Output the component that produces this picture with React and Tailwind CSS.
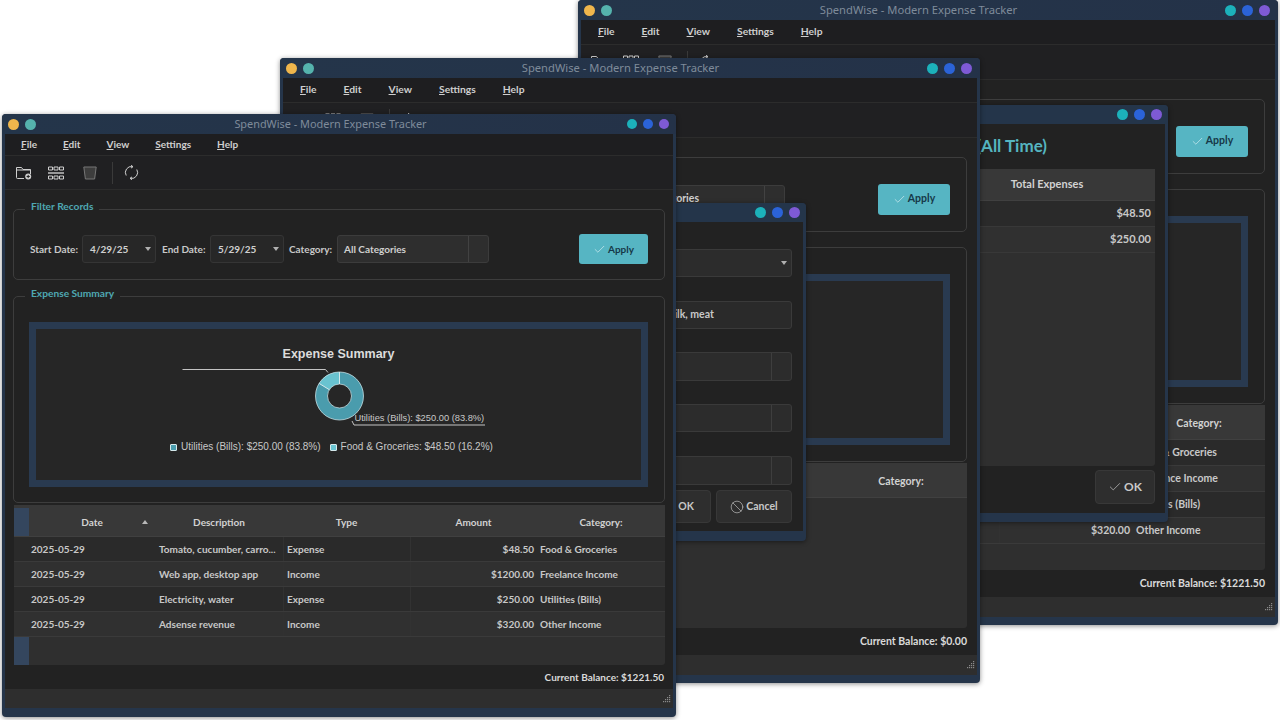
import React from 'react';
import {Check, Ban} from 'lucide-react';

const rows = [
    ['2025-05-29', 'Tomato, cucumber, carro...', 'Expense', '$48.50', 'Food & Groceries'],
    ['2025-05-29', 'Web app, desktop app', 'Income', '$1200.00', 'Freelance Income'],
    ['2025-05-29', 'Electricity, water', 'Expense', '$250.00', 'Utilities (Bills)'],
    ['2025-05-29', 'Adsense revenue', 'Income', '$320.00', 'Other Income'],
];

const sizes = {
    small: {
        outer: 'w-[674px] h-[603px]',
        title: 'h-[20px] pl-[6px] pr-[7px]',
        titleText: 'text-[10.9px] pr-[25px]',
        text: 'text-[10px]',
        menu: 'h-[21px] pl-[16px] gap-[26px] text-[10px]',
        toolbar: 'h-[35px]',
        group1: 'mt-[19px] h-[71px] mx-[8px]',
        group2: 'mt-[16px] h-[207px] mx-[8px] pt-[25px] pb-[15px] pl-[15px] pr-[16px]',
        filter: 'pt-[9px] pl-[16px] pr-[16px]',
        date: 'w-[74px]',
        combo: 'w-[152px] mx-[5px]',
        apply: 'w-[69px] h-[30px]',
        table: 'mt-[2px] h-[160px] ml-[9px] mr-[8px]',
        cols: 'grid-cols-[15px_126px_128px_127px_127px_1fr]',
        head: 'h-[32px]',
        row: 'h-[25px]',
        balance: 'h-[24px] pr-[9px]',
        status: 'h-[19px]',
        pad: 'mb-[9px]',
    },
    large: {
        outer: 'w-[700px] h-[625px]',
        title: 'h-[20px] pl-[6px] pr-[8px]',
        titleText: 'text-[11.2px] pr-[23px]',
        text: 'text-[10.5px]',
        menu: 'h-[24px] pl-[17px] gap-[27px] text-[10.3px]',
        toolbar: 'h-[36px]',
        group1: 'mt-[19px] h-[75px] mx-[10px]',
        group2: 'mt-[15px] h-[215px] mx-[10px] pt-[26px] pb-[16px] pl-[16px] pr-[16px]',
        filter: 'pt-[9px] pl-[16px] pr-[16px]',
        date: 'w-[79px]',
        combo: 'w-[158px] mx-[5px]',
        apply: 'w-[72px] h-[31px]',
        table: 'mt-[1px] h-[165px] ml-[10px] mr-[10px]',
        cols: 'grid-cols-[15px_131px_131px_131px_134px_1fr]',
        head: 'h-[35px]',
        row: 'h-[26px]',
        balance: 'h-[27px] pr-[10px]',
        status: 'h-[20px]',
        pad: 'mb-[8px]',
    },
};

function Dots({small}) {
    const dot = small ? 'w-[10px] h-[10px] rounded-full' : 'w-[11px] h-[11px] rounded-full';
    return (
        <div className="flex gap-[6px]">
            <span className={dot + ' bg-[#1cb1bb]'}/>
            <span className={dot + ' bg-[#2b63d8]'}/>
            <span className={dot + ' bg-[#7e5ad5]'}/>
        </div>
    );
}

function Grip() {
    const cells = [[6, 0], [4, 2], [6, 2], [2, 4], [4, 4], [6, 4], [0, 6], [2, 6], [4, 6], [6, 6]];
    return (
        <svg width="8" height="8" viewBox="0 0 8 8" className="mr-[2px]">
            {cells.map(([x, y]) => <rect key={x + '-' + y} x={x} y={y} width="1.2" height="1.2" fill="#8a8a8a"/>)}
        </svg>
    );
}

function FolderIcon() {
    return (
        <svg width="16" height="14" viewBox="0 0 16 14" fill="none" stroke="#cfcfcf" strokeWidth="1">
            <path d="M8 12.5H1.5a1 1 0 0 1-1-1V1.5h5l1.5 2h7.5V8"/>
            <path d="M.5 4h14"/>
            <circle cx="12.2" cy="10.5" r="3" fill="#cfcfcf" stroke="none"/>
            <path d="M10.6 10.5h3.2M12.2 8.9v3.2" stroke="#222222"/>
        </svg>
    );
}

function GridIcon() {
    return (
        <svg width="16" height="14" viewBox="0 0 16 14" fill="none" stroke="#cfcfcf" strokeWidth="1">
            <path d="M.5 1h4v3h-4zM6 1h4v3H6zM11.5 1h4v3h-4zM.5 10h4v3h-4zM6 10h4v3H6zM11.5 10h4v3h-4z"/>
            <path d="M0 7h16" strokeWidth="1.4"/>
        </svg>
    );
}

function TrashIcon() {
    return (
        <svg width="14" height="14" viewBox="0 0 14 14" fill="#3d3d3d" stroke="#777777" strokeWidth="1">
            <path d="M.8 1h12.4l-1.6 12H2.4z"/>
        </svg>
    );
}

function RefreshIcon() {
    return (
        <svg width="15" height="15" viewBox="0 0 15 15" fill="none" stroke="#cfcfcf" strokeWidth="1">
            <path d="M2.2 10.5A6 6 0 0 1 8.5 1.6"/>
            <path d="M12.8 4.5A6 6 0 0 1 6.5 13.4"/>
            <path d="M7 .3l2 1.4-2 1.4M8 11.9l-2 1.4 2 1.4"/>
        </svg>
    );
}

function Toolbar({small}) {
    return (
        <div className={sizes[small ? 'small' : 'large'].toolbar + ' flex items-center border-y border-[#2c2c2c] bg-[#202022] ' + (small ? 'pl-[11px]' : 'pl-[10px]')}>
            <div className="w-[32px]"><FolderIcon/></div>
            <div className="w-[35px]"><GridIcon/></div>
            <div className="w-[29px]"><TrashIcon/></div>
            <div className="w-px h-[22px] bg-[#3a3a3a] mr-[11px]"/>
            <RefreshIcon/>
        </div>
    );
}

function Menu({small}) {
    const items = [['F', 'ile'], ['E', 'dit'], ['V', 'iew'], ['S', 'ettings'], ['H', 'elp']];
    return (
        <div className={sizes[small ? 'small' : 'large'].menu + ' flex items-center bg-[#1e1e20] font-bold text-[#cfcfcf]'}>
            {items.map(([first, rest]) => <span key={first}><span className="underline">{first}</span>{rest}</span>)}
        </div>
    );
}

function Group({title, className, children}) {
    return (
        <div className={className + ' relative rounded-[5px] border border-[#3d3d3d]'}>
            <span className="absolute -top-[12px] left-[11px] bg-[#222222] px-[6px] text-[10.2px] font-bold leading-[16px] text-[#4fa8b2]">{title}</span>
            {children}
        </div>
    );
}

function Caret() {
    return <span className="w-0 h-0 border-x-[3.5px] border-x-transparent border-t-[4px] border-t-[#b0b0b0]"/>;
}

function DateBox({value, className}) {
    return (
        <div className={className + ' h-[28px] mx-[5px] flex items-center justify-between pl-[7px] pr-[4px] rounded-[3px] border border-[#353535] bg-[#272727] text-[#d0d0d0]'}>
            {value}
            <Caret/>
        </div>
    );
}

function Filter({small}) {
    const s = sizes[small ? 'small' : 'large'];
    return (
        <div className={s.filter + ' ' + s.text + " h-full flex items-center font-['Lato',sans-serif] font-bold text-[#c8c8c8]"}>
            <span className="w-[47px] whitespace-nowrap">Start Date:</span>
            <DateBox value="4/29/25" className={s.date}/>
            <span className="ml-[1px] w-[43px] whitespace-nowrap">End Date:</span>
            <DateBox value="5/29/25" className={s.date}/>
            <span className="w-[43px] whitespace-nowrap">Category:</span>
            <div className={s.combo + ' h-[28px] flex rounded-[3px] border border-[#3c3c3c] bg-[#2e2e2e]'}>
                <div className="flex-1 flex items-center pl-[6px] text-[#d0d0d0]">All Categories</div>
                <div className="w-[20px] border-l border-[#424242]"/>
            </div>
            <div className={s.apply + ' ml-auto flex items-center justify-center gap-[2px] rounded-[3px] bg-[#56b5c3] text-[#163848]'}>
                <Check size={13} strokeWidth={1.2} color="#d8f0f4"/>
                <span>Apply</span>
            </div>
        </div>
    );
}

function Donut() {
    return (
        <svg width="320" height="64" viewBox="0 0 320 64" fill="none" className="absolute inset-0">
            <path d="M3.5 2.5H146.5L149 5.5" stroke="#c4c4c4"/>
            <path d="M173 54l2 4H306" stroke="#c4c4c4"/>
            <circle cx="160.5" cy="29" r="18" stroke="#4a9cad" strokeWidth="12"/>
            <path d="M160.5 5A24 24 0 0 0 140.1 16.4L150.3 22.7A12 12 0 0 1 160.5 17Z" fill="#69c3d0"/>
            <circle cx="160.5" cy="29" r="24" stroke="#c3dde2" strokeWidth="0.8"/>
            <circle cx="160.5" cy="29" r="12" stroke="#c3dde2" strokeWidth="0.8"/>
            <path d="M160.5 5V17M140.1 16.4L150.3 22.7" stroke="#d5e8eb"/>
        </svg>
    );
}

function LegendItem({color, children}) {
    return (
        <span className="flex items-center gap-[4px]">
            <span className={color + ' w-[7px] h-[7px] rounded-[1px] border border-[#d5e8eb]'}/>
            {children}
        </span>
    );
}

function Chart() {
    return (
        <div className="h-full flex flex-col items-center font-['Liberation_Sans',sans-serif] text-[#c8c8c8]">
            <div className="mt-[17px] text-[12.5px] font-bold leading-[16px] text-[#dcdcdc]">Expense Summary</div>
            <div className="relative mt-[5px] w-[320px] h-[64px]">
                <Donut/>
                <span className="absolute left-[176px] top-[45px] text-[9.3px] leading-[12px] whitespace-nowrap">Utilities (Bills): $250.00 (83.8%)</span>
            </div>
            <div className="mt-[9px] mr-[14px] flex gap-[9px] text-[10px] leading-[14px]">
                <LegendItem color="bg-[#4a9cad]">Utilities (Bills): $250.00 (83.8%)</LegendItem>
                <LegendItem color="bg-[#69c3d0]">Food &amp; Groceries: $48.50 (16.2%)</LegendItem>
            </div>
        </div>
    );
}

function HeadCell({children, sort}) {
    return (
        <div className="relative flex items-center justify-center pt-[3px]">
            {children}
            {sort && <span className="absolute right-[7px] w-0 h-0 border-x-[3.5px] border-x-transparent border-b-[4px] border-b-[#b8b8b8]"/>}
        </div>
    );
}

function Table({small, data}) {
    const s = sizes[small ? 'small' : 'large'];
    return (
        <div className={s.table + ' ' + s.text + " flex flex-col rounded-[3px] bg-[#2f2f2f] font-['Lato',sans-serif] font-bold text-[#c8c8c8]"}>
            <div className={s.head + ' grid ' + s.cols + ' shrink-0 border-b border-[#404040] bg-[#383838] text-[#d2d2d2]'}>
                <div className="mt-[3px] bg-[#34465e]"/>
                <HeadCell sort>Date</HeadCell>
                <HeadCell>Description</HeadCell>
                <HeadCell>Type</HeadCell>
                <HeadCell>Amount</HeadCell>
                <HeadCell>Category:</HeadCell>
            </div>
            {data.map((r, i) => (
                <div key={r[1]} className={s.row + ' grid ' + s.cols + ' shrink-0 items-center border-b border-[#3a3a3a] ' + (i % 2 === 0 ? 'bg-[#2a2a2a]' : 'bg-[#303030]')}>
                    <div/>
                    <div className="pl-[2px]">{r[0]}</div>
                    <div className="pl-[4px] overflow-hidden whitespace-nowrap">{r[1]}</div>
                    <div className="pl-[3px] h-full flex items-center border-l border-[#313131]">{r[2]}</div>
                    <div className="pr-[3px] h-full flex items-center justify-end border-l border-[#323232]">{r[3]}</div>
                    <div className="pl-[3px] whitespace-nowrap">{r[4]}</div>
                </div>
            ))}
            <div className={'flex-1 grid ' + s.cols}>
                <div className="bg-[#34465e]"/>
            </div>
        </div>
    );
}

function MainWindow({className, small, data, balance, chart}) {
    const s = sizes[small ? 'small' : 'large'];
    return (
        <div className={className + ' ' + s.outer + " absolute flex flex-col rounded-[4px] bg-[#25354a] shadow-[0_1px_5px_rgba(0,0,0,0.45)] font-['Lato',sans-serif]"}>
            <div className={s.title + ' shrink-0 flex items-center rounded-t-[4px] bg-gradient-to-r from-[#24354a] to-[#243248]'}>
                <div className="w-[51px] flex gap-[6px]">
                    <span className="w-[11px] h-[11px] rounded-full bg-[#efb64c]"/>
                    <span className="w-[11px] h-[11px] rounded-full bg-[#55b3ad]"/>
                </div>
                <div className={s.titleText + " flex-1 text-center font-['Noto_Sans',sans-serif] text-[#7f8b9a]"}>SpendWise - Modern Expense Tracker</div>
                <Dots small={small}/>
            </div>
            <div className={s.pad + ' mx-[3px] flex-1 flex flex-col bg-[#222222]'}>
                <Menu small={small}/>
                <Toolbar small={small}/>
                <Group title="Filter Records" className={s.group1}>
                    <Filter small={small}/>
                </Group>
                <Group title="Expense Summary" className={s.group2}>
                    <div className="h-full border-[7px] border-[#293a50] bg-[#262626]">
                        {chart && <Chart/>}
                    </div>
                </Group>
                <Table small={small} data={data}/>
                <div className={s.balance + ' ' + s.text + ' flex items-center justify-end font-bold text-[#dadada]'}>Current Balance: {balance}</div>
                <div className={s.status + ' flex items-center justify-end bg-[#2e2e2e]'}>
                    <Grip/>
                </div>
            </div>
        </div>
    );
}

function DialogTitle() {
    return (
        <div className="h-[19px] shrink-0 flex items-center justify-end px-[6px] rounded-t-[4px] bg-[#24354a]">
            <Dots/>
        </div>
    );
}

function Spin() {
    return (
        <div className="flex rounded-[3px] border border-[#3a3a3a] bg-[#2c2c2c] h-full">
            <div className="flex-1"/>
            <div className="w-[20px] border-l border-[#3e3e3e]"/>
        </div>
    );
}

function EntryDialog() {
    return (
        <div className="absolute left-[600px] top-[203px] w-[206px] h-[338px] flex flex-col rounded-[4px] bg-[#25354a] shadow-[0_1px_5px_rgba(0,0,0,0.45)] font-['Lato',sans-serif] text-[10.5px] font-bold text-[#c8c8c8]">
            <DialogTitle/>
            <div className="mx-[3px] mb-[10px] flex-1 flex flex-col pl-[20px] pr-[11px] bg-[#222222]">
                <div className="mt-[27px] h-[28px] flex items-center justify-end pr-[4px] rounded-[3px] border border-[#3a3a3a] bg-[#2c2c2c]"><Caret/></div>
                <div className="mt-[24px] h-[28px] flex items-center pl-[15px] rounded-[3px] border border-[#3a3a3a] bg-[#2a2a2a] whitespace-nowrap">Eggs, milk, meat</div>
                <div className="mt-[23px] h-[29px]"><Spin/></div>
                <div className="mt-[23px] h-[28px]"><Spin/></div>
                <div className="mt-[24px] h-[29px]"><Spin/></div>
                <div className="mt-[5px] h-[33px] flex justify-end gap-[5px]">
                    <div className="w-[76px] flex items-center justify-end pr-[16px] rounded-[4px] border border-[#383838] bg-[#2e2e2e]">OK</div>
                    <div className="w-[76px] flex items-center justify-center gap-[2px] rounded-[4px] border border-[#383838] bg-[#2e2e2e]">
                        <Ban size={14} strokeWidth={1.1}/>
                        Cancel
                    </div>
                </div>
            </div>
        </div>
    );
}

function SummaryDialog() {
    const items = [['Food & Groceries', '$48.50'], ['Utilities (Bills)', '$250.00']];
    return (
        <div className="absolute left-[800px] top-[105px] w-[368px] h-[417px] flex flex-col rounded-[4px] bg-[#25354a] shadow-[0_1px_5px_rgba(0,0,0,0.45)] font-['Lato',sans-serif] text-[11px] font-bold text-[#c8c8c8]">
            <DialogTitle/>
            <div className="mx-[3px] mb-[9px] flex-1 flex flex-col pr-[10px] bg-[#222222]">
                <div className="h-[45px] pb-[2px] shrink-0 flex items-center justify-end pr-[108px] text-[17px] font-bold text-[#55b5c0] whitespace-nowrap">Expense Summary (All Time)</div>
                <div className="h-[297px] shrink-0 flex flex-col rounded-[3px] bg-[#2f2f2f]">
                    <div className="h-[32px] shrink-0 grid grid-cols-[1fr_216px] items-center border-b border-[#404040] bg-[#383838] text-center text-[#d2d2d2]">
                        <div>Category</div>
                        <div>Total Expenses</div>
                    </div>
                    {items.map(([name, total], i) => (
                        <div key={name} className={'h-[26px] shrink-0 grid grid-cols-[1fr_216px] items-center border-b border-[#383838] ' + (i % 2 === 0 ? 'bg-[#2a2a2a]' : 'bg-[#303030]')}>
                            <div className="pl-[4px]">{name}</div>
                            <div className="pr-[4px] text-right">{total}</div>
                        </div>
                    ))}
                </div>
                <div className="mt-[4px] ml-auto w-[60px] h-[34px] flex items-center justify-center gap-[2px] rounded-[4px] border border-[#383838] bg-[#2e2e2e] text-[12px]">
                    <Check size={14} strokeWidth={1.2}/>
                    OK
                </div>
            </div>
        </div>
    );
}

export default function App() {
    return (
        <div className="relative w-[1280px] h-[720px] overflow-hidden bg-white">
            <MainWindow className="left-[578px] top-0" data={rows} balance="$1221.50"/>
            <SummaryDialog/>
            <MainWindow className="left-[280px] top-[58px]" data={[]} balance="$0.00"/>
            <EntryDialog/>
            <MainWindow className="left-[2px] top-[114px]" small data={rows} balance="$1221.50" chart/>
        </div>
    );
}
